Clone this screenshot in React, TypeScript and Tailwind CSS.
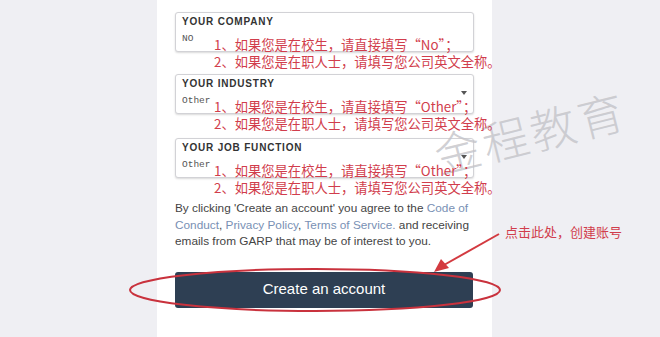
import React from 'react';

type FieldProps = {
  label: string;
  value: string;
  hint: string;
  select?: boolean;
  className?: string;
};

// one input box with the red note written over it
function Field({ label, value, hint, select, className }: FieldProps) {
  return (
    <div
      className={`relative h-[40px] w-[299px] rounded-[3px] border border-[#d2d2d6] bg-white pl-[6px] pt-[3px] shadow-[0_1px_2px_rgba(0,0,0,0.15)] ${className ?? ''}`}
    >
      <div className="text-[10px] font-bold leading-[12px] tracking-[0.8px] text-[#333]">{label}</div>
      <div className="mt-[5px] font-['Liberation_Mono',monospace] text-[9.5px] leading-[12px] text-[#555]">{value}</div>
      {select && (
        <span className="absolute right-[6px] top-[16px] h-0 w-0 border-x-[3px] border-t-[4px] border-x-transparent border-t-[#555]" />
      )}
      <div className="absolute left-[38px] top-[23px] z-10 whitespace-nowrap font-['Noto_Sans_CJK_SC',sans-serif] text-[13.3px] leading-[17px] text-[#d13d4c]">
        <div>1、如果您是在校生，请直接填写“{hint}”；</div>
        <div>2、如果您是在职人士，请填写您公司英文全称。</div>
      </div>
    </div>
  );
}

export default function App() {
  return (
    <div className="relative h-[337px] w-[660px] overflow-hidden bg-[#efeff3] font-['Liberation_Sans',Arial,sans-serif]">
      <div className="ml-[157px] h-full w-[335px] bg-white pl-[18px] pt-[12px]">
        <Field label="YOUR COMPANY" value="NO" hint="No" />
        <Field label="YOUR INDUSTRY" value="Other" hint="Other" select className="mt-[22px]" />
        <Field label="YOUR JOB FUNCTION" value="Other" hint="Other" select className="mt-[24px]" />

        <p className="mt-[22px] whitespace-nowrap text-[11.8px] leading-[16.5px] text-[#444]">
          By clicking 'Create an account' you agree to the <span className="text-[#7890b4]">Code of</span>
          <br />
          <span className="text-[#7890b4]">Conduct</span>, <span className="text-[#7890b4]">Privacy Policy</span>,{' '}
          <span className="text-[#7890b4]">Terms of Service.</span> and receiving
          <br />
          emails from GARP that may be of interest to you.
        </p>

        <button className="mt-[22px] h-[36px] w-[298px] rounded-[3px] bg-[#2e3f53] text-[15px] text-white">
          Create an account
        </button>
      </div>

      {/* watermark */}
      <div className="pointer-events-none absolute left-[432px] top-[106px] w-[196px] -rotate-[14deg] whitespace-nowrap font-['Noto_Sans_CJK_SC',sans-serif] text-[46px] font-light leading-[50px] tracking-[3px] text-[#c3c3c8]/80">
        金程教育
      </div>

      {/* red markup: ellipse round the button and arrow */}
      <svg className="pointer-events-none absolute inset-0" width="660" height="337" viewBox="0 0 660 337">
        <ellipse cx="315" cy="290" rx="185" ry="21" fill="none" stroke="#c9323d" strokeWidth="2" />
        <line x1="499" y1="234" x2="444" y2="265" stroke="#d33a40" strokeWidth="2" />
        <polygon points="434,272 441,259 449,268" fill="#d33a40" />
      </svg>

      <div className="absolute left-[505px] top-[224px] whitespace-nowrap font-['Noto_Sans_CJK_SC',sans-serif] text-[13px] leading-[16px] text-[#d13d4c]">
        点击此处，创建账号
      </div>
    </div>
  );
}
